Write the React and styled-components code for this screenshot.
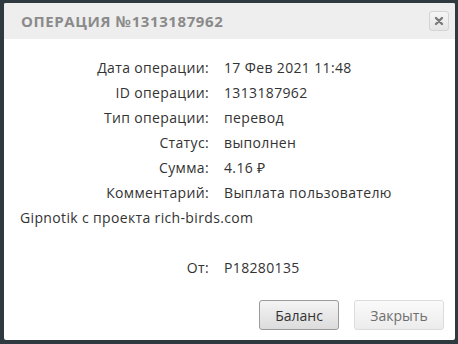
import styled, { createGlobalStyle } from "styled-components";

const Global = createGlobalStyle`
    html, body {
        margin: 0;
        padding: 0;
        background: #2e3a40;
    }
    body {
        width: 458px;
        height: 344px;
        overflow: hidden;
    }
`;

const Page = styled.div`
    width: 458px;
    height: 344px;
    padding: 3px 3px 4px 4px;
    box-sizing: border-box;
`;

const Dialog = styled.div`
    background: #fff;
    height: 337px;
    display: flex;
    flex-direction: column;
    border-radius: 2px;
    overflow: hidden;
`;

const Header = styled.div`
    height: 36px;
    background: #eeeeee;
    display: flex;
    align-items: center;
    justify-content: space-between;
    padding: 0 6px 0 17px;
`;

const Title = styled.h1`
    margin: 0;
    font-family: "Open Sans", sans-serif;
    font-size: 15px;
    font-weight: 700;
    letter-spacing: 0.6px;
    text-transform: uppercase;
    color: #8a8a8a;
`;

const CloseBtn = styled.button`
    width: 20px;
    height: 20px;
    padding: 0;
    border: 1px solid #d4d4d4;
    border-radius: 3px;
    background: linear-gradient(#f6f6f6, #e6e6e6);
    display: flex;
    align-items: center;
    justify-content: center;
`;

const Body = styled.div`
    flex: 1;
    padding: 16px 20px 0 16px;
    font-family: "Open Sans", sans-serif;
    font-size: 14px;
    letter-spacing: 0.35px;
    line-height: 25px;
    color: #333;
`;

const Row = styled.div`
    min-height: 25px;
`;

const Label = styled.span`
    display: inline-block;
    width: 189px;
    margin-right: 15px;
    text-align: right;
`;

const Footer = styled.div`
    display: flex;
    justify-content: flex-end;
    gap: 15px;
    padding: 0 11px 10px 0;
`;

const Button = styled.button`
    height: 30px;
    width: ${p => p.w}px;
    font-family: "Open Sans", sans-serif;
    font-size: 14px;
    border-radius: 3px;
    border: 1px solid ${p => (p.muted ? "#dcdcdc" : "#9a9a9a")};
    color: ${p => (p.muted ? "#6f6f6f" : "#333")};
    background: ${p => (p.muted
        ? "linear-gradient(#fafafa, #ececec)"
        : "linear-gradient(#f4f4f4, #dcdcdc)")};
`;

const rows = [
    ["Дата операции:", "17 Фев 2021 11:48"],
    ["ID операции:", "1313187962"],
    ["Тип операции:", "перевод"],
    ["Статус:", "выполнен"],
    ["Сумма:", "4.16 ₽"],
    ["Комментарий:", "Выплата пользователю Gipnotik с проекта rich-birds.com"],
    null,
    ["От:", "P18280135"],
];

export default function App() {
    return (
        <Page>
            <Global />
            <Dialog>
                <Header>
                    <Title>Операция №1313187962</Title>
                    <CloseBtn>
                        <svg width="10" height="10" viewBox="0 0 10 10">
                            <path d="M2 2 L8 8 M8 2 L2 8" stroke="#7a7a7a" strokeWidth="2.4" strokeLinecap="round" />
                        </svg>
                    </CloseBtn>
                </Header>
                <Body>
                    {rows.map((r, i) =>
                        r ? (
                            <Row key={i}>
                                <Label>{r[0]}</Label>
                                {r[1]}
                            </Row>
                        ) : (
                            <Row key={i} />
                        )
                    )}
                </Body>
                <Footer>
                    <Button w={80}>Баланс</Button>
                    <Button w={90} muted>Закрыть</Button>
                </Footer>
            </Dialog>
        </Page>
    );
}
